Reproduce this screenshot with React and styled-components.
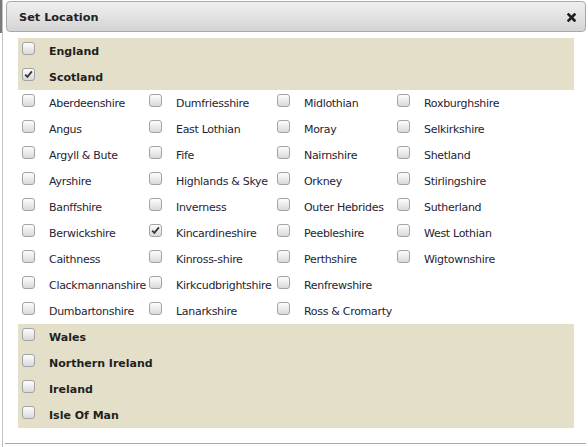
import React from "react";
import styled, { createGlobalStyle } from "styled-components";

const GlobalStyle = createGlobalStyle`
  html, body {
    margin: 0;
    padding: 0;
    background: #ffffff;
  }
  body {
    font-family: "DejaVu Sans", Verdana, sans-serif;
  }
`;

const Page = styled.div`
  position: relative;
  width: 588px;
  height: 447px;
  overflow: hidden;
`;

const BackEdge = styled.div`
  position: absolute;
  left: 0;
  top: 0;
  width: 2px;
  height: 33px;
  background: #7a7a7a;
`;

const Dialog = styled.div`
  margin-left: 2px;
  height: 447px;
  border-left: 1px solid #c2c2c2;
  display: flex;
  flex-direction: column;
`;

const TitleBar = styled.div`
  margin: 1px 2px 0 3px;
  height: 29px;
  border: 1px solid #a8a8a8;
  border-radius: 4px;
  background: linear-gradient(to bottom, #efefef 0%, #e2e2e2 50%, #d4d4d4 100%);
  display: flex;
  align-items: center;
  justify-content: space-between;
  padding: 0 9px 0 12px;
`;

const Title = styled.span`
  font-weight: bold;
  font-size: 11.3px;
  color: #222222;
  padding-top: 1px;
`;

const CloseBtn = styled.span`
  display: flex;
  width: 9px;
  height: 9px;
  margin-top: 2px;
`;

const Content = styled.div`
  margin: 6px 14px 0 15px;
`;

const Panel = styled.div`
  background: #e4dfc8;
`;

const Row = styled.div`
  height: 26px;
  display: flex;
  align-items: flex-start;
`;

const Box = styled.span`
  box-sizing: border-box;
  flex: none;
  width: 13px;
  height: 13px;
  margin: 4px 14px 0 4px;
  border: 1px solid #a3a3a3;
  border-radius: 3px;
  background: linear-gradient(to bottom, #fdfdfd 0%, #ebebeb 50%, #d9d9d9 100%);
  display: flex;
  align-items: center;
  justify-content: center;
`;

const Label = styled.span`
  padding-top: 2px;
  line-height: 24px;
  font-size: 11px;
  font-weight: ${(p) => (p.$bold ? "bold" : "normal")};
  letter-spacing: ${(p) => (p.$bold ? "0" : "-0.3px")};
  color: ${(p) => (p.$bold ? "#1f1f1f" : "#262333")};
  white-space: nowrap;
`;

const CountyGrid = styled.div`
  display: grid;
  grid-auto-flow: column;
  grid-template-rows: repeat(9, 26px);
  grid-template-columns: 127px 128px 120px 1fr;
`;

const Footer = styled.div`
  margin: 15px 2px 0 2px;
  border-top: 1px solid #ababab;
`;

function Check({ checked }) {
  return (
    <Box>
      {checked && (
        <svg width="9" height="9" viewBox="0 0 9 9">
          <path
            d="M1.2 4.6 L3.4 6.9 L7.9 1.4"
            fill="none"
            stroke="#3a3a3a"
            strokeWidth="1.9"
          />
        </svg>
      )}
    </Box>
  );
}

function Option({ label, checked, bold }) {
  return (
    <Row>
      <Check checked={checked} />
      <Label $bold={bold}>{label}</Label>
    </Row>
  );
}

const counties = [
  "Aberdeenshire",
  "Angus",
  "Argyll & Bute",
  "Ayrshire",
  "Banffshire",
  "Berwickshire",
  "Caithness",
  "Clackmannanshire",
  "Dumbartonshire",
  "Dumfriesshire",
  "East Lothian",
  "Fife",
  "Highlands & Skye",
  "Inverness",
  "Kincardineshire",
  "Kinross-shire",
  "Kirkcudbrightshire",
  "Lanarkshire",
  "Midlothian",
  "Moray",
  "Nairnshire",
  "Orkney",
  "Outer Hebrides",
  "Peebleshire",
  "Perthshire",
  "Renfrewshire",
  "Ross & Cromarty",
  "Roxburghshire",
  "Selkirkshire",
  "Shetland",
  "Stirlingshire",
  "Sutherland",
  "West Lothian",
  "Wigtownshire",
];

const checkedCounties = ["Kincardineshire"];

export default function App() {
  return (
    <Page>
      <GlobalStyle />
      <BackEdge />
      <Dialog>
        <TitleBar>
          <Title>Set Location</Title>
          <CloseBtn>
            <svg width="9" height="9" viewBox="0 0 9 9">
              <path
                d="M1.5 1.5 L7.5 7.5 M7.5 1.5 L1.5 7.5"
                stroke="#1e1e1e"
                strokeWidth="2.6"
                strokeLinecap="square"
              />
            </svg>
          </CloseBtn>
        </TitleBar>
        <Content>
          <Panel>
            <Option label="England" bold />
            <Option label="Scotland" bold checked />
          </Panel>
          <CountyGrid>
            {counties.map((c) => (
              <Option key={c} label={c} checked={checkedCounties.includes(c)} />
            ))}
          </CountyGrid>
          <Panel>
            <Option label="Wales" bold />
            <Option label="Northern Ireland" bold />
            <Option label="Ireland" bold />
            <Option label="Isle Of Man" bold />
          </Panel>
        </Content>
        <Footer />
      </Dialog>
    </Page>
  );
}
